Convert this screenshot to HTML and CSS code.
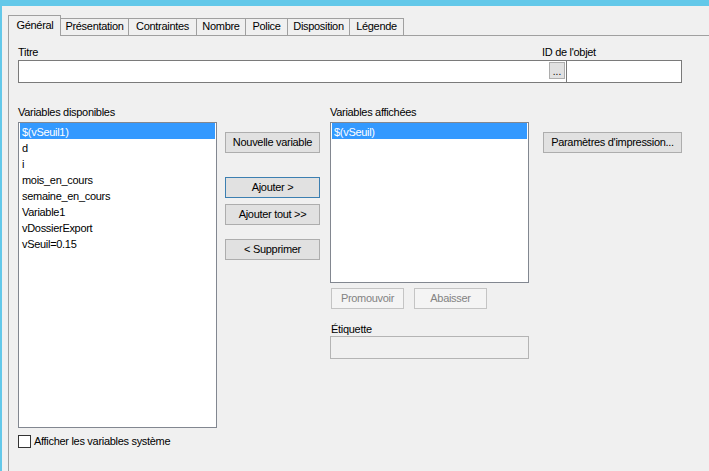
FILE: index.html
```html
<!DOCTYPE html>
<html lang="fr">
<head>
<meta charset="utf-8">
<title>Propriétés</title>
<link rel="stylesheet" href="styles.css">
</head>
<body>
<div class="window">
  <div class="tabctl">
    <div class="tabs">
      <div class="tab sel t-gen">Général</div>
      <div class="tab t-pres">Présentation</div>
      <div class="tab t-cont">Contraintes</div>
      <div class="tab t-nomb">Nombre</div>
      <div class="tab t-pol">Police</div>
      <div class="tab t-disp">Disposition</div>
      <div class="tab t-leg">Légende</div>
    </div>
    <div class="panel">
      <div class="labels">
        <span class="lbl">Titre</span>
        <span class="lbl">ID de l'objet</span>
      </div>
      <div class="inputs">
        <div class="textbox titre"><span class="browse">...</span></div>
        <div class="textbox objid"></div>
      </div>
      <div class="main">
        <div class="col col-avail">
          <div class="lbl">Variables disponibles</div>
          <ul class="listbox tall">
            <li class="selected">$(vSeuil1)</li>
            <li>d</li>
            <li>i</li>
            <li>mois_en_cours</li>
            <li>semaine_en_cours</li>
            <li>Variable1</li>
            <li>vDossierExport</li>
            <li>vSeuil=0.15</li>
          </ul>
          <div class="check"><span class="box"></span><span>Afficher les variables système</span></div>
        </div>
        <div class="col col-btns">
          <div class="btn b-new">Nouvelle variable</div>
          <div class="btn b-add default">Ajouter &gt;</div>
          <div class="btn b-addall">Ajouter tout &gt;&gt;</div>
          <div class="btn b-del">&lt; Supprimer</div>
        </div>
        <div class="col col-shown">
          <div class="lbl">Variables affichées</div>
          <ul class="listbox short">
            <li class="selected">$(vSeuil)</li>
          </ul>
          <div class="order">
            <div class="btn disabled">Promouvoir</div>
            <div class="btn disabled">Abaisser</div>
          </div>
          <div class="lbl lbl-etiq">Étiquette</div>
          <div class="textbox etiq"></div>
        </div>
        <div class="col col-print">
          <div class="btn b-print">Paramètres d'impression...</div>
        </div>
      </div>
    </div>
  </div>
</div>
</body>
</html>
```

FILE: styles.css
```css
html, body {
  margin: 0;
  padding: 0;
}
body {
  width: 709px;
  height: 471px;
  overflow: hidden;
  background: #f0f0f0;
  font-family: "Liberation Sans", Arial, sans-serif;
  font-size: 11px;
  letter-spacing: -0.3px;
  color: #000;
}
.window {
  box-sizing: border-box;
  height: 471px;
  border-top: 6px solid #63c8e9;
  border-left: 2px solid #63c8e9;
  display: flex;
  flex-direction: column;
}
.tabctl {
  flex: 1;
  display: flex;
  flex-direction: column;
  padding: 9px 0 0 6px;
}
.tabs {
  display: flex;
  align-items: flex-end;
  height: 20px;
}
.tab {
  box-sizing: border-box;
  height: 17px;
  line-height: 13px;
  padding: 1px 0 0 0;
  text-align: center;
  border: 1px solid #a0a0a0;
  border-bottom: none;
  background: #f0f0f0;
  margin-left: -1px;
  white-space: nowrap;
}
.tab.sel {
  position: relative;
  z-index: 1;
  height: 21px;
  margin-bottom: -1px;
  margin-left: 0;
  padding: 3px 0 0 1px;
  background: #f0f0f0;
}
.t-gen { width: 53px; }
.t-pres { width: 69px; }
.t-cont { width: 69px; }
.t-nomb { width: 50px; }
.t-pol { width: 43px; }
.t-disp { width: 63px; }
.t-leg { width: 55px; }
.panel {
  flex: 1;
  border-top: 1px solid #a0a0a0;
  border-left: 1px solid #a0a0a0;
  padding: 10px 0 0 9px;
}
.lbl {
  line-height: 13px;
  white-space: nowrap;
}
.labels {
  display: grid;
  grid-template-columns: 524px auto;
}
.inputs {
  display: flex;
  margin-top: 1px;
}
.textbox {
  box-sizing: border-box;
  height: 23px;
  background: #fff;
  border: 1px solid #7a7a7a;
}
.textbox.titre {
  width: 549px;
  display: flex;
  justify-content: flex-end;
  align-items: flex-start;
  padding: 1px 1px 0 0;
}
.textbox.objid {
  width: 115px;
  border-left: none;
}
.browse {
  box-sizing: border-box;
  width: 16px;
  height: 17px;
  background: #e1e1e1;
  border: 1px solid #adadad;
  font-size: 10px;
  letter-spacing: 0;
  line-height: 17px;
  text-align: center;
  color: #000;
}
.main {
  display: flex;
  align-items: flex-start;
  margin-top: 23px;
}
.col {
  display: flex;
  flex-direction: column;
}
.col-avail {
  width: 199px;
}
.col-btns {
  width: 95px;
  margin-left: 8px;
  padding-top: 26px;
}
.col-shown {
  width: 199px;
  margin-left: 10px;
}
.col-print {
  width: 139px;
  margin-left: 14px;
  padding-top: 26px;
}
.listbox {
  box-sizing: border-box;
  list-style: none;
  margin: 3px 0 0 0;
  padding: 0 1px;
  background: #fff;
  border: 1px solid #828790;
}
.listbox.tall {
  height: 306px;
}
.listbox.short {
  height: 161px;
}
.listbox li {
  height: 16px;
  box-sizing: border-box;
  padding: 2px 0 0 2px;
  line-height: 14px;
  white-space: nowrap;
}
.listbox li.selected {
  background: #3399ff;
  color: #fff;
}
.check {
  display: flex;
  align-items: center;
  margin-top: 7px;
  line-height: 13px;
}
.box {
  box-sizing: border-box;
  width: 13px;
  height: 13px;
  border: 1px solid #333;
  background: #fff;
  margin-right: 3px;
}
.btn {
  box-sizing: border-box;
  height: 21px;
  line-height: 19px;
  text-align: center;
  background: #e1e1e1;
  border: 1px solid #adadad;
  white-space: nowrap;
}
.btn.default {
  border-color: #3c7fb1;
}
.b-add {
  margin-top: 24px;
}
.b-addall {
  margin-top: 6px;
}
.b-del {
  margin-top: 14px;
}
.order {
  display: flex;
  gap: 10px;
  margin: 5px 0 0 1px;
}
.btn.disabled {
  width: 73px;
  background: #f4f4f4;
  border-color: #c4c4c4;
  color: #838383;
}
.lbl-etiq {
  margin: 14px 0 0 1px;
}
.textbox.etiq {
  width: 199px;
  background: #f0f0f0;
  border-color: #b4b4b4;
}
```
